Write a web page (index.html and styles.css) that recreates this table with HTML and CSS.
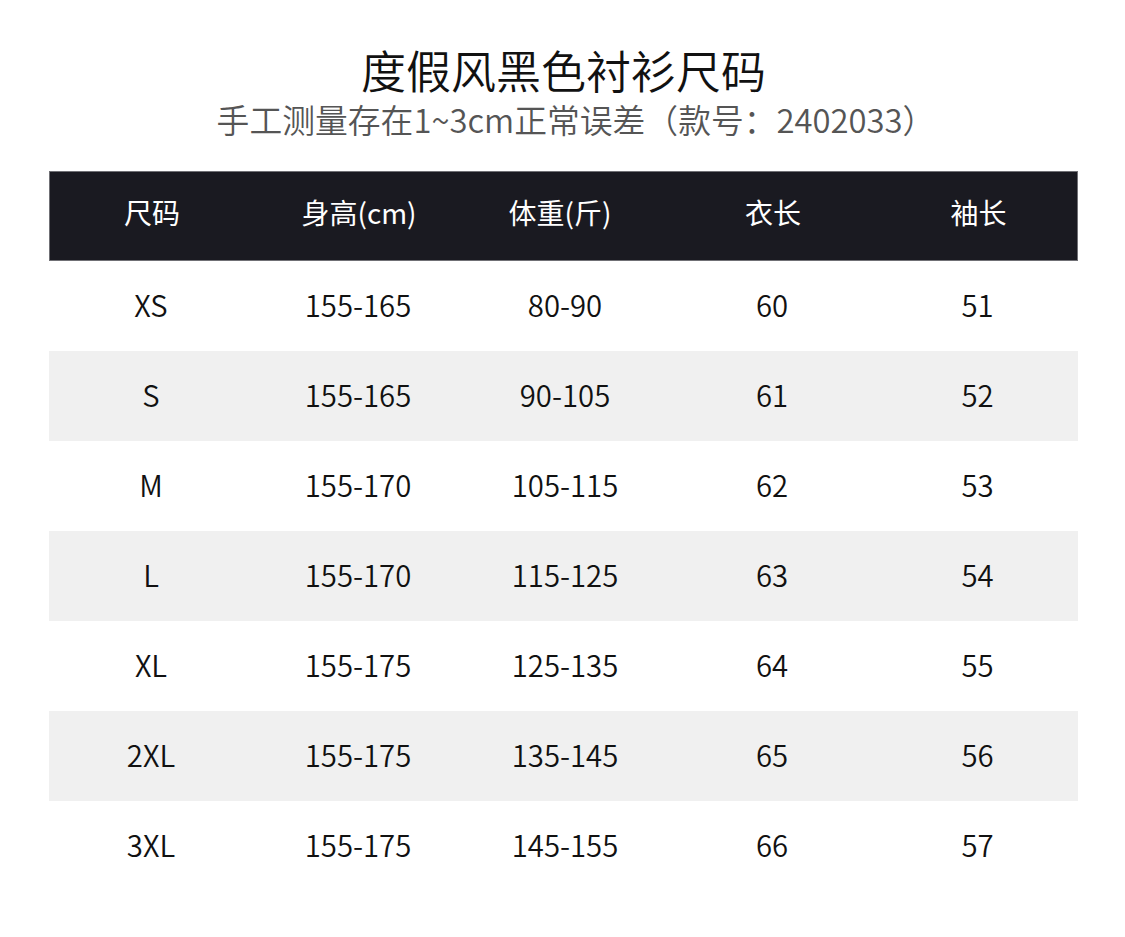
FILE: index.html
```html
<!DOCTYPE html>
<html lang="zh">
<head>
<meta charset="utf-8">
<link rel="stylesheet" href="styles.css">
</head>
<body>
<div class="page">
  <h1 class="title">度假风黑色衬衫尺码</h1>
  <p class="subtitle">手工测量存在1~3cm正常误差（款号：2402033）</p>
  <div class="table">
    <div class="row head"><span>尺码</span><span>身高(cm)</span><span class="shift">体重(斤)</span><span>衣长</span><span>袖长</span></div>
    <div class="row"><span>XS</span><span>155-165</span><span>80-90</span><span>60</span><span>51</span></div>
    <div class="row alt"><span>S</span><span>155-165</span><span>90-105</span><span>61</span><span>52</span></div>
    <div class="row"><span>M</span><span>155-170</span><span>105-115</span><span>62</span><span>53</span></div>
    <div class="row alt"><span>L</span><span>155-170</span><span>115-125</span><span>63</span><span>54</span></div>
    <div class="row"><span>XL</span><span>155-175</span><span>125-135</span><span>64</span><span>55</span></div>
    <div class="row alt"><span>2XL</span><span>155-175</span><span>135-145</span><span>65</span><span>56</span></div>
    <div class="row"><span>3XL</span><span>155-175</span><span>145-155</span><span>66</span><span>57</span></div>
  </div>
</div>
</body>
</html>
```
FILE: styles.css
```css
* { box-sizing: border-box; }
html, body { margin: 0; padding: 0; background: #fff; }
body { font-family: "Noto Sans CJK SC", "Noto Sans", sans-serif; color: #111; }
.page { width: 1125px; height: 937px; padding: 42px 47px 0 49px; display: flex; flex-direction: column; align-items: center; }
.title { margin: 0; font-size: 45px; font-weight: 350; line-height: 56px; color: #111; }
.subtitle { margin: 0 0 0 25px; font-size: 32.8px; font-weight: 350; line-height: 42px; color: #555; }
.table { width: 1029px; margin-top: 31px; display: flex; flex-direction: column; }
.row { display: grid; grid-template-columns: 204px 210px 204px 210px 201px; height: 90px; padding-bottom: 5px; align-items: center; font-size: 29.3px; font-weight: 350; color: #111; }
.row span { text-align: center; }
.row.head { background: #1a1a21; color: #fff; font-size: 28px; font-weight: 400; height: 90px; padding-bottom: 8px; border: 1px solid #707075; }
.row.head .shift { padding-right: 12px; }
.row.alt { background: #f0f0f0; }
```
